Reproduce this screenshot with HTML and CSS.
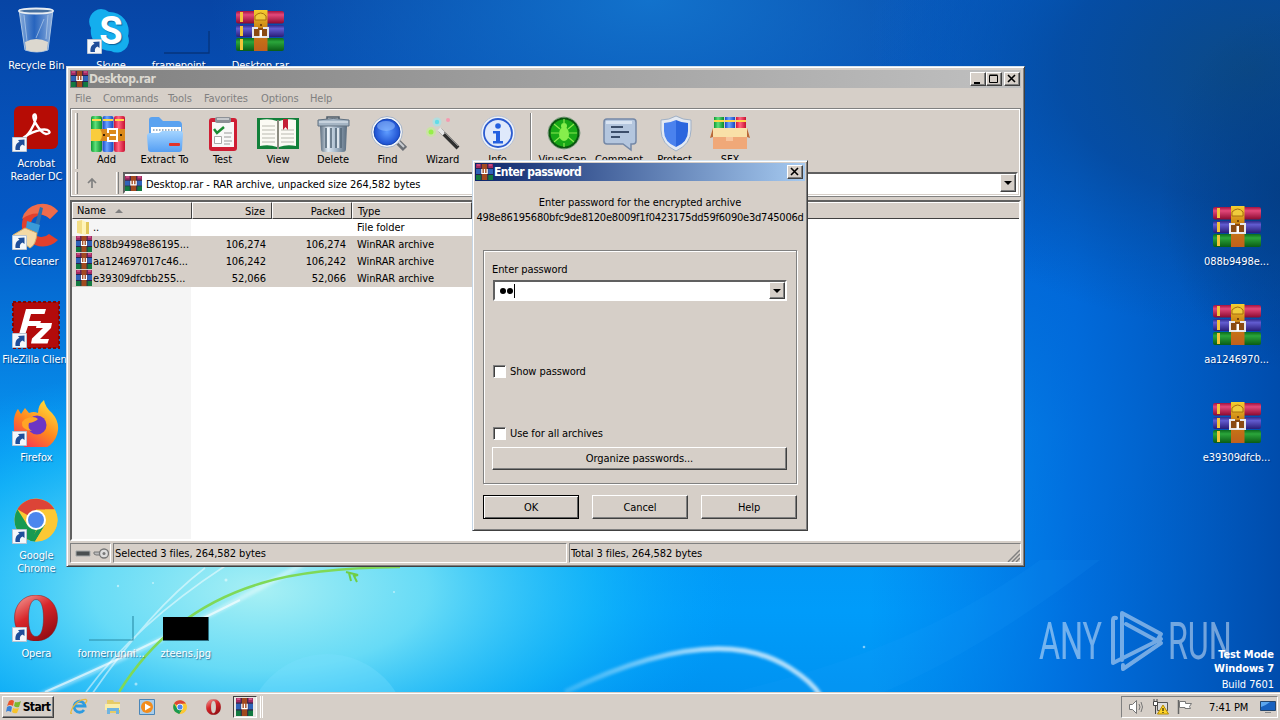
FILE: index.html
```html
<!DOCTYPE html>
<html lang="en">
<head>
  <meta charset="UTF-8" />
  <title>Desktop</title>
  <link rel="stylesheet" href="styles.css">
</head>
<body>

<!-- shared icons -->
<svg class="sprite">
  <defs>
    <linearGradient id="gPink" x2="0" y2="1"><stop offset="0" stop-color="#a3123f"/><stop offset=".3" stop-color="#e2487a"/><stop offset="1" stop-color="#8c0a30"/></linearGradient>
    <linearGradient id="gBlue" x2="0" y2="1"><stop offset="0" stop-color="#2d2a8c"/><stop offset=".3" stop-color="#625cd0"/><stop offset="1" stop-color="#2a1d78"/></linearGradient>
    <linearGradient id="gGreen" x2="0" y2="1"><stop offset="0" stop-color="#0c6b1c"/><stop offset=".3" stop-color="#2ba63b"/><stop offset="1" stop-color="#0a5c16"/></linearGradient>
    <linearGradient id="gStrap" x2="0" y2="1"><stop offset="0" stop-color="#f5cf2e"/><stop offset=".45" stop-color="#c97f12"/><stop offset="1" stop-color="#c0601c"/></linearGradient>
    <linearGradient id="vGreen"><stop offset="0" stop-color="#0d9a33"/><stop offset=".4" stop-color="#5fe07a"/><stop offset="1" stop-color="#0a8a2b"/></linearGradient>
    <linearGradient id="vBlue"><stop offset="0" stop-color="#1748c8"/><stop offset=".4" stop-color="#6ba4ff"/><stop offset="1" stop-color="#1646c0"/></linearGradient>
    <linearGradient id="vRed"><stop offset="0" stop-color="#d01238"/><stop offset=".4" stop-color="#ff6580"/><stop offset="1" stop-color="#c8102f"/></linearGradient>
    <linearGradient id="gFolder" x2="0" y2="1"><stop offset="0" stop-color="#a4d4ff"/><stop offset="1" stop-color="#559ff4"/></linearGradient>
    <linearGradient id="gMetal"><stop offset="0" stop-color="#5c6e80"/><stop offset=".3" stop-color="#dfe9f2"/><stop offset=".6" stop-color="#a3b6c8"/><stop offset="1" stop-color="#5a6c7e"/></linearGradient>
    <linearGradient id="gOpera" x1=".2" x2=".8" y2="1"><stop offset="0" stop-color="#f0908c"/><stop offset=".4" stop-color="#d8262a"/><stop offset="1" stop-color="#8c0a10"/></linearGradient>
    <linearGradient id="gFox" x1=".8" x2=".2" y2="1"><stop offset="0" stop-color="#ffe23c"/><stop offset=".5" stop-color="#ff8a1e"/><stop offset="1" stop-color="#f5285a"/></linearGradient>
    <linearGradient id="gBin"><stop offset="0" stop-color="#b9d2ee" stop-opacity=".75"/><stop offset=".45" stop-color="#3d78cc" stop-opacity=".6"/><stop offset="1" stop-color="#cfe0f4" stop-opacity=".7"/></linearGradient>
    <radialGradient id="gLens"><stop offset="0" stop-color="#5e9cff"/><stop offset="1" stop-color="#1c4fd0"/></radialGradient>
  </defs>

  <symbol id="rar" viewBox="0 0 48 42">
    <rect x="0" y="1" width="48" height="12.500" rx="2" fill="url(#gPink)"/>
    <rect x="0" y="15" width="48" height="12" rx="2" fill="url(#gBlue)"/>
    <rect x="0" y="28" width="48" height="13" rx="2" fill="url(#gGreen)"/>
    <path d="M4 2h3v10h-3zM4 16h3v10h-3zM4 29h3v11h-3z" fill="#f3c53a"/>
    <rect x="18" y="0" width="13.500" height="41" fill="url(#gStrap)"/>
    <path d="M19 10V6q6-6 11 0v4z" fill="#f0cc3c" stroke="#a86e10"/>
    <path d="M18 18h13v9H18z" fill="#8a4a12"/>
    <path d="M22 18h-5v9h15v-9h-5" fill="none" stroke="#e6e6ea" stroke-width="2"/>
    <rect x="23.500" y="20" width="2.500" height="7" fill="#fff"/>
    <circle cx="25" cy="15" r="1" fill="#5c2d08"/>
  </symbol>

  <symbol id="rar16" viewBox="0 0 16 16" preserveAspectRatio="none">
    <path d="M0 0h16v5H0z" fill="#a32a62"/><path d="M0 5h16v5.500H0z" fill="#2f62b8"/><path d="M0 10.500h16V16H0z" fill="#127a40"/>
    <path d="M0 4.500h16M0 10.500h16M5 0v16M11 0v16" stroke="#28234e"/>
    <path d="M1 1h3M12 1h3" stroke="#e36a9a"/>
    <path d="M5.500 0h5v16h-5z" fill="#a2491f"/>
    <path d="M5.500 5v4.500h5V5M8 5v4" fill="none" stroke="#fff" stroke-width="1.200"/>
  </symbol>

  <symbol id="arrow" viewBox="0 0 15 15">
    <path d="M.5.5h14v14H.5z" fill="#f4f7fb" stroke="#b9c4d2"/>
    <path d="M3.500 13C3 8 5 5.500 7.500 5L6 3l6.500-.500V9L10.500 7.500C8 8.500 7.500 10.500 8 13z" fill="#1f4e9a"/>
  </symbol>

  <symbol id="chrome" viewBox="0 0 44 44">
    <circle cx="22" cy="22" r="21.500" fill="#fbc834"/>
    <path d="M22 22 3.400 11.200A21.500 21.500 0 0 1 40.600 11.500H22z" fill="#dc4437"/>
    <path d="M3.400 11.200 14 28l8 4-4 11A21.500 21.500 0 0 1 3.400 11.200z" fill="#189a52"/>
    <path d="M22 22 31 27 21 43.500l-5-.800L24 30z" fill="#189a52"/>
    <path d="M40.600 11.500A21.500 21.500 0 0 1 21 43.500L31 27l0-15.500z" fill="#fbc834"/>
    <circle cx="22" cy="22" r="10" fill="#fff"/>
    <circle cx="22" cy="22" r="8" fill="#4b86ee"/>
  </symbol>

  <symbol id="opera" viewBox="0 0 44 46">
    <path fill-rule="evenodd" d="M22 0C9 0 .5 10 .5 23S9 46 22 46s21.500-10 21.500-23S35 0 22 0zm0 4.500c5 0 7.500 7 7.500 18.500S27 41.500 22 41.500 14.500 34 14.500 23 17 4.500 22 4.500z" fill="url(#gOpera)" stroke="#7d1a1e" stroke-width=".5"/>
  </symbol>
</svg>

<div class="desktop">

  <svg class="wallpaper" viewBox="0 0 1280 720" preserveAspectRatio="none">
    <defs>
      <linearGradient id="sky" x1="0" y1="0" x2="0" y2="1">
        <stop offset="0" stop-color="#0745a5"/><stop offset=".3" stop-color="#0459c6"/><stop offset=".6" stop-color="#0792ee"/><stop offset=".85" stop-color="#009cfa"/><stop offset="1" stop-color="#0090ee"/>
      </linearGradient>
      <linearGradient id="dark" x1="0" y1="0" x2="1" y2="0">
        <stop offset=".68" stop-color="#0070e8" stop-opacity="0"/><stop offset=".84" stop-color="#0068da" stop-opacity=".85"/><stop offset="1" stop-color="#004cac"/>
      </linearGradient>
      <radialGradient id="topGlow"><stop offset="0" stop-color="#1272cc"/><stop offset="1" stop-color="#1272cc" stop-opacity="0"/></radialGradient>
      <radialGradient id="topRight"><stop offset="0" stop-color="#0c4a86"/><stop offset=".5" stop-color="#06489a" stop-opacity=".8"/><stop offset="1" stop-color="#0450a8" stop-opacity="0"/></radialGradient>
      <radialGradient id="rightShade"><stop offset="0" stop-color="#033b80" stop-opacity=".8"/><stop offset="1" stop-color="#033b80" stop-opacity="0"/></radialGradient>
      <radialGradient id="glow"><stop offset="0" stop-color="#a8f0f4"/><stop offset=".35" stop-color="#72e2f6" stop-opacity=".9"/><stop offset=".7" stop-color="#1cc2fa" stop-opacity=".6"/><stop offset="1" stop-color="#00a5ff" stop-opacity="0"/></radialGradient>
      <linearGradient id="arc"><stop offset="0" stop-color="#fff" stop-opacity=".25"/><stop offset=".6" stop-color="#fff"/><stop offset="1" stop-color="#fff"/></linearGradient>
      <filter id="soft"><feGaussianBlur stdDeviation="1.500"/></filter>
    </defs>
    <rect width="1280" height="720" fill="url(#sky)"/>
    <ellipse cx="650" cy="0" rx="440" ry="220" fill="url(#topGlow)"/>
    <rect width="1280" height="720" fill="url(#dark)"/>
    <ellipse cx="1250" cy="70" rx="380" ry="260" fill="url(#topRight)"/>
    <ellipse cx="1290" cy="190" rx="130" ry="180" fill="url(#rightShade)"/>
    <ellipse cx="260" cy="590" rx="480" ry="230" fill="url(#glow)"/>
    <path d="M560 720Q860 690 1040 560L1100 560Q930 690 800 720z" fill="#29a6ff" opacity=".1"/>
    <circle cx="327" cy="735" r="81" fill="#7fe2ff" opacity=".3"/>
    <path d="M40 695Q170 640 310 560" fill="none" stroke="#fff" stroke-width="5" opacity=".4" filter="url(#soft)"/>
    <path d="M45 692Q130 655 240 600" fill="none" stroke="#fff" stroke-width="2" opacity=".6"/>
    <path d="M86 692Q135 625 225 566M92 694Q150 610 205 568" fill="none" stroke="#fff" stroke-width="1.600" opacity=".5"/>
    <path d="M119 692Q170 610 262 583Q310 568 400 567" fill="none" stroke="#7fd957" stroke-width="2.500"/>
    <path d="M346 572l12 3-4 1 3 6M349 573l2 8" fill="none" stroke="#6fce45" stroke-width="2"/>
    <path d="M565 692Q715 620 790 668Q812 682 820 695" fill="none" stroke="url(#arc)" stroke-width="5" opacity=".7" filter="url(#soft)"/>
    <path d="M565 692Q735 640 800 678Q812 686 820 692" fill="none" stroke="url(#arc)" stroke-width="0"/>
    <g fill="#fff" opacity=".5"><circle cx="118" cy="586" r="1.200"/><circle cx="153" cy="583" r="1"/><circle cx="226" cy="580" r="1.500"/><circle cx="136" cy="684" r="1.500"/><circle cx="394" cy="592" r="1"/><circle cx="864" cy="647" r="1.300"/></g>
  </svg>

  <div class="icons">
    <div class="icon c1 r1">
      <svg width="48" height="48" viewBox="0 0 48 48">
        <path d="M7 3h34l-5 40q-11 4-23 0z" fill="url(#gBin)" stroke="#a8c4e4"/>
        <ellipse cx="24" cy="4" rx="17" ry="2.500" fill="#466f9f" stroke="#e8edf2" stroke-width="1.800"/>
        <path d="M13 35q11-6 23 0l-1 8q-10 4-21 0z" fill="#dcd8cf"/>
        <path d="M12 8l3 26M36 8l-2 24M32 12l-8 19" stroke="#c5daf0" opacity=".6"/>
      </svg>
      <span>Recycle Bin</span>
    </div>
    <div class="icon c2 r1">
      <svg width="48" height="48" viewBox="0 0 48 48">
        <path d="M14 2a13 13 0 0 1 8 3 19 19 0 0 1 19 24 12 12 0 0 1-17 15A20 20 0 0 1 4 21 12.500 12.500 0 0 1 14 2z" fill="#14aeee"/>
        <text x="24" y="37" font-family="Roboto, sans-serif" font-size="38" font-weight="700" fill="#fff" text-anchor="middle">S</text>
        <use href="#arrow" x="0" y="32" width="15" height="15"/>
      </svg>
      <span>Skype</span>
    </div>
    <div class="icon c3 r1">
      <svg width="48" height="48" viewBox="0 0 48 48"><path d="M2 46h45V24" fill="none" stroke="#06347c" stroke-width="1.300"/></svg>
      <span class="shift">framepoint</span>
    </div>
    <div class="icon c4 r1">
      <svg width="48" height="48"><use href="#rar" y="3" width="48" height="42"/></svg>
      <span>Desktop.rar</span>
    </div>

    <div class="icon c1 r2">
      <svg width="48" height="48" viewBox="0 0 48 48">
        <rect x="2" y="1" width="44" height="43" rx="6" fill="#b60c05"/>
        <path d="M10 34C16 31 22 22 24 13q0-4-1.500-3.500C18 11 28 28 34 29q5-.5 3-3C33 22 18 27 10 34z" fill="none" stroke="#fff" stroke-width="2.400"/>
        <use href="#arrow" x="0" y="32" width="15" height="15"/>
      </svg>
      <span>Acrobat<br>Reader DC</span>
    </div>
    <div class="icon c1 r3">
      <svg width="48" height="48" viewBox="0 0 48 48">
        <path d="M46 8A21 21 0 1 0 46 37L37 31A11 11 0 1 1 38 16z" fill="#e2402c"/>
        <path d="M10 16A21 21 0 0 1 46 8l-8 8Q25 5 10 16z" fill="#ee6c4c"/>
        <path d="M28 4l3 1-4 18-4-1z" fill="#2c6fae"/>
        <path d="M15 18l13 4-2 8-12-5z" fill="#3a9bd8"/>
        <path d="M13 25l12 5q-1 12-7 15L1 32z" fill="#f5d9a5" stroke="#d8ab66"/>
        <use href="#arrow" x="0" y="32" width="15" height="15"/>
      </svg>
      <span>CCleaner</span>
    </div>
    <div class="icon c1 r4">
      <svg width="48" height="48" viewBox="0 0 48 48">
        <rect x="1" y="1" width="46" height="46" fill="#b30b0b" stroke="#7f0606" stroke-width="2" stroke-dasharray="3 2"/>
        <path d="M14 8h20l-1.500 5H19l-2 7h12l-1.500 5H16l-4 12H6z" fill="#fff"/>
        <path d="M25 22h15l-1 5-11 11h9l-1.500 4.500H19l1-5L31 27h-7z" fill="#fff"/>
        <use href="#arrow" x="0" y="32" width="15" height="15"/>
      </svg>
      <span>FileZilla Client</span>
    </div>
    <div class="icon c1 r5">
      <svg width="48" height="48" viewBox="0 0 48 48">
        <path d="M2 27C1 19 4 12 6 10l3 5 4-6 4 5q5-2 9 0 0-8 6-13 1 7 8 13 7 8 6 17A21 21 0 0 1 2 27z" fill="url(#gFox)"/>
        <circle cx="25" cy="26" r="9.500" fill="#6c36c4"/>
        <path d="M13 20q9-4 13 0-3 3-9 4-2 5 3 8-11-1-10-9z" fill="#ffa426"/>
        <use href="#arrow" x="0" y="32" width="15" height="15"/>
      </svg>
      <span>Firefox</span>
    </div>
    <div class="icon c1 r6">
      <svg width="48" height="48"><use href="#chrome" x="2" y="1" width="44" height="44"/><use href="#arrow" x="0" y="32" width="15" height="15"/></svg>
      <span>Google<br>Chrome</span>
    </div>
    <div class="icon c1 r7">
      <svg width="48" height="48"><use href="#opera" x="2" y="0" width="44" height="46"/><use href="#arrow" x="0" y="32" width="15" height="15"/></svg>
      <span>Opera</span>
    </div>
    <div class="icon c2 r7">
      <svg width="48" height="48" viewBox="0 0 48 48"><path d="M2 45h44V21" fill="none" stroke="#2a8ca6" stroke-width="1.100"/></svg>
      <span>formerrunni...</span>
    </div>
    <div class="icon c3 r7">
      <svg width="48" height="48"><rect x="1" y="22" width="46" height="24" fill="#2b6d80"/><rect x="1" y="22" width="45" height="23" fill="#000"/></svg>
      <span>zteens.jpg</span>
    </div>

    <div class="icon c6 r3"><svg width="48" height="48"><use href="#rar" y="3" width="48" height="42"/></svg><span>088b9498e...</span></div>
    <div class="icon c6 r4"><svg width="48" height="48"><use href="#rar" y="3" width="48" height="42"/></svg><span>aa1246970...</span></div>
    <div class="icon c6 r5"><svg width="48" height="48"><use href="#rar" y="3" width="48" height="42"/></svg><span>e39309dfcb...</span></div>
  </div>

  <svg class="logo" width="210" height="64" viewBox="0 0 210 64">
    <g font-family="Roboto, sans-serif" font-size="51" font-weight="400" fill="#fff">
      <text transform="translate(1 50) scale(.7 1)" textLength="90" lengthAdjust="spacingAndGlyphs">ANY</text>
      <text transform="translate(130 50) scale(.7 1)" textLength="91" lengthAdjust="spacingAndGlyphs">RUN</text>
    </g>
    <g fill="none" stroke="#fff" stroke-width="4" stroke-linejoin="round" stroke-linecap="round">
      <path d="M78 9q-3-1-3 2v43l48-24"/>
      <path d="M84 51V4l39 21-3 5"/>
      <path d="M88 15l35 19-38 26v-4"/>
    </g>
  </svg>
  <div class="build"><b>Test Mode</b><b>Windows 7</b><span>Build 7601</span></div>

  <!-- WinRAR -->
  <div class="window main-win">
    <div class="titlebar inactive">
      <svg width="17" height="16"><use href="#rar16" width="17" height="16"/></svg>
      <span class="title">Desktop.rar</span>
      <div class="btn cap"><svg width="14" height="12"><path d="M3 9h6v2H3z"/></svg></div>
      <div class="btn cap"><svg width="14" height="12"><path d="M2.500 2.500h8v7h-8zM2.500 2h8" fill="none" stroke="#000"/></svg></div>
      <div class="btn cap last"><svg width="14" height="12"><path d="M3 2l7 7M10 2l-7 7" stroke="#000" stroke-width="1.600"/></svg></div>
    </div>
    <div class="menu">
      <span class="m-file">File</span><span class="m-cmd">Commands</span><span class="m-tools">Tools</span><span class="m-fav">Favorites</span><span class="m-opt">Options</span><span>Help</span>
    </div>
    <div class="rebar">
      <div class="toolbar">
        <i class="grip"></i>
        <div class="tool">
          <svg width="38" height="38" viewBox="0 0 38 38">
            <rect x="3" y="1" width="11" height="36" rx="2" fill="url(#vGreen)"/><rect x="14.500" y="1" width="11" height="36" rx="2" fill="url(#vBlue)"/><rect x="26" y="1" width="11" height="36" rx="2" fill="url(#vRed)"/>
            <path d="M4 4h9v2H4zM15 4h10v2H15zM27 4h9v2h-9z" fill="#ffd84a"/>
            <path d="M3 14h34v12H3z" fill="#db8a1c"/><path d="M3 14h9q4 6 0 12H3z" fill="#f9cc3c"/>
            <path d="M20 18v-4h9v12h-9v-4" fill="none" stroke="#fff" stroke-width="2"/><path d="M22 20h6" stroke="#fff" stroke-width="2"/><circle cx="16" cy="20" r="1"/><circle cx="33" cy="20" r="1"/>
          </svg><span>Add</span>
        </div>
        <div class="tool w61">
          <svg width="38" height="38" viewBox="0 0 38 38">
            <path d="M3 5q0-3 3-3h7l4 4h15q4 0 4 4v20H3z" fill="#5aa2f0"/>
            <path d="M5 12h30v12H5z" fill="#fff"/><path d="M7 15h26" stroke="#9bb2c8" stroke-width="2" stroke-dasharray="1.500 1.500"/>
            <path d="M1 21q0-3 3-3h9l3-2h18q3 0 3 3l-1 15q0 3-3 3H5q-3 0-3-3z" fill="url(#gFolder)"/>
            <rect x="23" y="28" width="11" height="3" rx="1" fill="#e2332a"/>
          </svg><span>Extract To</span>
        </div>
        <div class="tool">
          <svg width="38" height="38" viewBox="0 0 38 38">
            <rect x="5" y="3" width="28" height="33" rx="3" fill="#cf1e34"/><path d="M8 7h22v25H8z" fill="#f8f8f8"/>
            <rect x="11" y="2" width="16" height="6" rx="2" fill="#8d9197"/><path d="M13 4h12" stroke="#fff"/>
            <path d="M10 14l3 4 7-6" fill="none" stroke="#1c8b33" stroke-width="2.500"/>
            <path d="M20 18h8M20 22h7M20 26h8M20 29h6" stroke="#9a9a9a"/><path d="M10.500 21.500h7v7h-7z" fill="#fff" stroke="#a9a9a9"/>
          </svg><span>Test</span>
        </div>
        <div class="tool w56">
          <svg width="44" height="38" viewBox="0 0 44 38">
            <path d="M1 3h42v31H1z" fill="#12803a"/>
            <path d="M4 5q9-2 17 1v26q-8-3-17-1zM40 5q-9-2-17 1v26q8-3 17-1z" fill="#fbfaf4"/>
            <path d="M6 11h13M6 15h13M6 19h13M6 23h13M6 27h13M25 15h13M25 19h13M25 23h13M25 27h13" stroke="#b9b9b0"/>
            <path d="M22 5v29" stroke="#8b8b80" stroke-width="2"/><path d="M27 4h5v11l-2.500-3-2.500 3z" fill="#c41f36"/>
          </svg><span>View</span>
        </div>
        <div class="tool w54">
          <svg width="38" height="38" viewBox="0 0 38 38">
            <path d="M6 11h27l-1 23q0 3-3 3H10q-3 0-3-3z" fill="url(#gMetal)"/>
            <path d="M12 13v20M17 13v20M22 13v20M27 13v20" stroke="#526577" stroke-width="1.500"/><path d="M14 13v20M24 13v20" stroke="#f2f7fb" stroke-width="1.500"/>
            <path d="M4 5q15-3 31 0v6H4z" fill="#a5b5c4" stroke="#617180"/><path d="M5 7h29" stroke="#e9f0f6"/><path d="M13 4V2h12v2" fill="none" stroke="#4f5d69" stroke-width="1.500"/>
          </svg><span>Delete</span>
        </div>
        <div class="tool">
          <svg width="38" height="38" viewBox="0 0 38 38">
            <path d="M27 25l9 9" stroke="#6b6f75" stroke-width="6"/><path d="M27 24l8 8" stroke="#c9cdd2" stroke-width="2"/>
            <circle cx="18" cy="17" r="15.500" fill="#f2f5fa" stroke="#a7b4c7"/><circle cx="18" cy="17" r="13" fill="url(#gLens)" stroke="#1646b0"/>
            <ellipse cx="17" cy="11" rx="9" ry="5" fill="#9cc6ff" opacity=".5"/>
          </svg><span>Find</span>
        </div>
        <div class="tool">
          <svg width="38" height="38" viewBox="0 0 38 38">
            <path d="M16 15l18 18" stroke="#303030" stroke-width="4"/><path d="M15 14l5 5" stroke="#e6e6e6" stroke-width="4"/><path d="M20 17l14 14" stroke="#8a8a8a"/>
            <circle cx="7" cy="17" r="5" fill="#bff08c" opacity=".6"/><circle cx="7" cy="17" r="2.500" fill="#97ef4a"/><circle cx="13" cy="7" r="4.500" fill="#9ae8ee" opacity=".6"/><circle cx="13" cy="7" r="2.200" fill="#62dce8"/><circle cx="24" cy="5" r="2" fill="#f59ab0"/>
          </svg><span>Wizard</span>
        </div>
        <div class="tool">
          <svg width="38" height="38" viewBox="0 0 38 38">
            <circle cx="19" cy="18" r="17" fill="#eef2f8" stroke="#b6c1d4"/><circle cx="19" cy="18" r="14" fill="#dfe9fb" stroke="#2b5bd0" stroke-width="1.800"/>
            <circle cx="19" cy="11" r="2.800" fill="#2460e0"/><path d="M14 16h7v10h3v2.500H14V26h3v-7.500h-3z" fill="#2460e0"/>
          </svg><span>Info</span>
        </div>
        <i class="sep"></i>
        <div class="tool w57">
          <svg width="38" height="38" viewBox="0 0 38 38">
            <circle cx="20" cy="18" r="16" fill="#e9f3e6" stroke="#7f9a80"/><circle cx="20" cy="18" r="14.500" fill="#17a816" stroke="#0a5710" stroke-width="2"/>
            <g stroke="#8ae850" stroke-width="1.200" fill="none"><path d="M16 14l-6-5M24 14l6-5M15 18H7M25 18h8M16 22l-6 5M24 22l6 5M20 4v4M20 28v4"/></g>
            <ellipse cx="20" cy="19" rx="5" ry="7" fill="#86ee4c"/><circle cx="20" cy="11" r="3" fill="#86ee4c"/>
          </svg><span>VirusScan</span>
        </div>
        <div class="tool w56">
          <svg width="38" height="38" viewBox="0 0 38 38">
            <path d="M7 4h26q3 0 3 3v19q0 3-3 3h-2v6l-8-6H7q-3 0-3-3V7q0-3 3-3z" fill="#b4c6de" stroke="#7488a6" stroke-width="1.500"/><path d="M6 6h26v3H6z" fill="#d9e4f2"/>
            <path d="M11 12h12M11 17h18M11 22h9" stroke="#3c4e6a" stroke-width="2"/>
          </svg><span>Comment</span>
        </div>
        <div class="tool">
          <svg width="38" height="38" viewBox="0 0 38 38">
            <path d="M20 1q7 4 15 4v10q0 14-15 21Q5 29 5 15V5q8 0 15-4z" fill="#e3e9f2" stroke="#9fb0c6"/>
            <path d="M20 5q6 3 12 3v8q0 11-12 16z" fill="#2b66de"/><path d="M20 5q-6 3-12 3v8q0 11 12 16z" fill="#4a82ee"/>
          </svg><span>Protect</span>
        </div>
        <div class="tool w56">
          <svg width="42" height="38" viewBox="0 0 42 38">
            <path d="M5 2h10v14H5z" fill="url(#vGreen)"/><path d="M16 2h10v14H16z" fill="url(#vBlue)"/><path d="M27 2h10v14H27z" fill="url(#vRed)"/><path d="M5 5h10v2H5zM16 5h10v2H16zM27 5h10v2H27z" fill="#ffd84a"/>
            <path d="M4 13h34v21H4z" fill="#f0a878"/><path d="M4 13h34l3 9H1z" fill="#f9e0a8"/><path d="M4 13l-3 10 3-1zM38 13l3 10-3-1z" fill="#b8683a"/><path d="M17 22h7v4h-7z" fill="#f8c49c"/>
          </svg><span>SFX</span>
        </div>
      </div>
      <div class="address">
        <i class="grip"></i>
        <div class="up"><svg width="12" height="12"><path d="M6 11V2M2 6l4-4 4 4" fill="none" stroke="#808080" stroke-width="1.700"/></svg></div>
        <i class="grip"></i>
        <div class="field path-field">
          <svg width="17" height="15"><use href="#rar16" width="17" height="15"/></svg>
          <span>Desktop.rar - RAR archive, unpacked size 264,582 bytes</span>
          <div class="btn drop"></div>
        </div>
      </div>
    </div>

    <div class="list">
      <div class="row head">
        <div class="name">Name <i class="sort"></i></div><div class="num">Size</div><div class="num">Packed</div><div class="type">Type</div><div class="rest"></div>
      </div>
      <div class="row">
        <div class="name"><svg width="16" height="16"><path d="M1 2l5-1v14l-5-1z" fill="#f3de86"/><path d="M6 1l4 2v13l-4-1z" fill="#fff4b8"/><path d="M10 3h3v12h-3z" fill="#e2c75c"/></svg>..</div><div class="num"></div><div class="num"></div><div class="type">File folder</div>
      </div>
      <div class="row sel">
        <div class="name"><svg width="16" height="16"><use href="#rar16" width="16" height="16"/></svg>088b9498e86195...</div><div class="num">106,274</div><div class="num">106,274</div><div class="type">WinRAR archive</div>
      </div>
      <div class="row sel">
        <div class="name"><svg width="16" height="16"><use href="#rar16" width="16" height="16"/></svg>aa124697017c46...</div><div class="num">106,242</div><div class="num">106,242</div><div class="type">WinRAR archive</div>
      </div>
      <div class="row sel">
        <div class="name"><svg width="16" height="16"><use href="#rar16" width="16" height="16"/></svg>e39309dfcbb255...</div><div class="num">52,066</div><div class="num">52,066</div><div class="type">WinRAR archive</div>
      </div>
    </div>

    <div class="status">
      <div class="pane keys">
        <svg width="36" height="14"><path d="M3 5h14v5H3z" fill="#4a4f50" stroke="#a4a8a8"/><path d="M21 6h8v3h-6l-2-1z" fill="#bbb" stroke="#777"/><circle cx="31" cy="7.500" r="4.500" fill="#ddd" stroke="#777" stroke-width="1.300"/><circle cx="31" cy="7.500" r="1.500" fill="#777"/></svg>
      </div>
      <div class="pane selected">Selected 3 files, 264,582 bytes</div>
      <div class="pane total"><span>Total 3 files, 264,582 bytes</span><svg width="13" height="13"><path d="M1 13L13 1M5 13l8-8M9 13l4-4" stroke="#808080" stroke-width="1.500"/></svg></div>
    </div>
  </div>

  <!-- password prompt -->
  <div class="window dialog">
    <div class="titlebar active">
      <svg width="17" height="16"><use href="#rar16" width="17" height="16"/></svg>
      <span class="title">Enter password</span>
      <div class="btn cap last"><svg width="14" height="12"><path d="M3 2l7 7M10 2l-7 7" stroke="#000" stroke-width="1.600"/></svg></div>
    </div>
    <div class="prompt">
      <div>Enter password for the encrypted archive</div>
      <div class="hash">498e86195680bfc9de8120e8009f1f0423175dd59f6090e3d745006d</div>
    </div>
    <div class="group">
      <div class="label">Enter password</div>
      <div class="field pass"><span class="dot"></span><span class="dot"></span><i class="caret"></i><div class="btn drop"></div></div>
      <div class="check show"><i></i>Show password</div>
      <div class="check all"><i></i>Use for all archives</div>
      <div class="btn organize">Organize passwords...</div>
    </div>
    <div class="actions">
      <div class="btn default">OK</div><div class="btn">Cancel</div><div class="btn">Help</div>
    </div>
  </div>

  <div class="taskbar">
    <div class="btn start">
      <svg width="16" height="16" viewBox="0 0 16 16"><path d="M3 2q3-2 5 0L7 7Q4 5 1 7z" fill="#e8552b"/><path d="M9 3q3 1 6-1l-2 6q-3 1-5-1z" fill="#7cb82f"/><path d="M1 8q3-2 5 0l-1 5q-3-2-5 0z" fill="#3a82d8"/><path d="M7 9q3 1 6 0l-2 5q-3 1-5-1z" fill="#f6c32c"/></svg>
      <b>Start</b>
    </div>
    <div class="quick">
      <svg width="18" height="18" viewBox="0 0 18 18"><path d="M14 12a5.500 5.500 0 1 1 1-4H5" fill="none" stroke="#2d9be0" stroke-width="2.800"/><path d="M2 15Q-1 17 3 9 9 1 16 1.500q2 1-1 4" fill="none" stroke="#e9b93c" stroke-width="1.300"/></svg>
      <svg width="18" height="18" viewBox="0 0 18 18"><path d="M3 2h6l1 2h6v11H3z" fill="#e6cb66"/><path d="M1 6h15v6H1z" fill="#faedaa"/><path d="M3 10h12v6h-3v-3H6v3H3z" fill="#6fb4e0"/></svg>
      <svg width="18" height="18" viewBox="0 0 18 18"><path d="M1.500 1.500h15v15h-15z" fill="#a9cdea" stroke="#4a86b8"/><circle cx="9" cy="9" r="6" fill="#f28c1c"/><path d="M7 5.500l6 3.500-6 3.500z" fill="#fff"/></svg>
      <svg width="18" height="18"><use href="#chrome" x="2" y="2" width="14" height="14"/></svg>
      <svg width="18" height="18"><use href="#opera" x="1" y="1" width="15" height="16"/></svg>
    </div>
    <div class="running"><svg width="17" height="18"><use href="#rar16" width="17" height="18"/></svg></div>
    <i class="grip"></i>
    <div class="tray">
      <svg width="18" height="16" viewBox="0 0 18 16"><path d="M1.500 5.500h3l4-4v13l-4-4h-3z" fill="#fff" stroke="#777"/><path d="M11 5q2 3 0 6M13 3q3 5 0 10" fill="none" stroke="#777"/></svg>
      <svg width="18" height="16" viewBox="0 0 18 16"><path d="M5.500 3.500h10v8h-10z" fill="#ddd" stroke="#555"/><path d="M1.500 2.500h4v4h-4zM3.500 7v8M2 0v2M5 0v2" fill="#fff" stroke="#444"/><path d="M11 6l5.500 9h-11z" fill="#ffd428" stroke="#b58a00"/><path d="M11 9v3M11 13v1" stroke="#000"/></svg>
      <svg width="18" height="16" viewBox="0 0 18 16"><path d="M2.500 1v14" stroke="#666" stroke-width="1.500"/><path d="M3.500 2.500h6v2h6l-2 3 1 2H9v-1H3.500z" fill="#fff" stroke="#777"/></svg>
      <span>7:41 PM</span>
      <svg width="17" height="16" viewBox="0 0 17 16"><path d="M1.500 2.500h15v9h-15z" fill="#1761bf" stroke="#24466e"/><path d="M2 3h9q-5 4-9 5z" fill="#5ba6ef"/><path d="M6 13h6v1H6z" fill="#888"/></svg>
    </div>
  </div>

</div>

</body>
</html>
```
FILE: styles.css
```css
* {
  box-sizing: border-box;
}
html, body {
  margin: 0;
  padding: 0;
  height: 100%;
  overflow: hidden;
}
body {
  font-family: "DejaVu Sans Condensed", "DejaVu Sans", sans-serif;
  font-size: 11px;
  letter-spacing: -0.08px;
  color: #000;
}
svg {
  display: block;
  flex: none;
}

.sprite {
  position: absolute;
  width: 0;
  height: 0;
}

.desktop {
  position: relative;
  width: 1280px;
  height: 720px;
  overflow: hidden;
}

.wallpaper {
  position: absolute;
  width: 1280px;
  height: 720px;
}

/* desktop icons */
.icons {
  position: absolute;
  top: 7px;
  left: -1px;
  width: 1275px;
  display: grid;
  grid-template-columns: repeat(4, 74.7px) 1fr 75px;
  grid-template-rows: repeat(7, 98px);
}
.icon {
  display: flex;
  flex-direction: column;
  align-items: center;
  gap: 4px;
  color: #fff;
  line-height: 13px;
  text-align: center;
  white-space: nowrap;
  text-shadow: 1px 1px 1px rgba(0, 20, 70, 0.5);
}
.shift { margin-right: 14px; }
.c1 { grid-column: 1; }
.c2 { grid-column: 2; }
.c3 { grid-column: 3; }
.c4 { grid-column: 4; }
.c6 { grid-column: 6; }
.r1 { grid-row: 1; }
.r2 { grid-row: 2; }
.r3 { grid-row: 3; }
.r4 { grid-row: 4; }
.r5 { grid-row: 5; }
.r6 { grid-row: 6; }
.r7 { grid-row: 7; }

.logo {
  position: absolute;
  left: 1038px;
  top: 609px;
  opacity: 0.45;
}
.build {
  position: absolute;
  right: 6px;
  top: 648px;
  display: flex;
  flex-direction: column;
  align-items: flex-end;
  line-height: 14px;
  color: #fff;
}
.build span {
  line-height: 18px;
}

/* windows */
.window {
  position: absolute;
  display: flex;
  flex-direction: column;
  background: #d6cfc8;
  border: 1px solid;
  border-color: #d6e3ee #404040 #404040 #c6d6e6;
  box-shadow: inset 1px 1px #fff, inset -1px -1px #808080;
}
.main-win {
  left: 66px;
  top: 66px;
  width: 959px;
  height: 501px;
  padding: 3px;
}
.titlebar {
  display: flex;
  align-items: center;
  height: 18px;
  padding: 0 2px 0 1px;
  font-weight: bold;
}
.title {
  flex: 1;
  padding-left: 1px;
  font-size: 12px;
  letter-spacing: -0.55px;
}
.inactive {
  padding-right: 1px;
  background: linear-gradient(90deg, #808080, #c0c0c0);
  color: #dcd8d0;
}
.active {
  background: linear-gradient(90deg, #0a246a, #a6caf0);
  color: #fff;
}
.btn {
  display: flex;
  align-items: center;
  justify-content: center;
  background: #d6cfc8;
  border: 1px solid;
  border-color: #fff #404040 #404040 #fff;
  box-shadow: inset -1px -1px #808080;
}
.cap {
  width: 16px;
  height: 14px;
}
.last {
  margin-left: 2px;
}
.menu {
  display: flex;
  height: 20px;
  padding-left: 5px;
  line-height: 21px;
  color: #808080;
}
.m-file { width: 28px; }
.m-cmd { width: 65px; }
.m-tools { width: 36px; }
.m-fav { width: 57px; }
.m-opt { width: 49px; }

.rebar {
  height: 89px;
  border: 1px solid #808080;
  box-shadow: inset 1px 1px #fff, inset -1px -1px #fff;
  padding: 4px 2px 0 4px;
}
.grip {
  width: 3px;
  border-left: 1px solid #fff;
  border-right: 1px solid #808080;
}
.toolbar {
  display: flex;
  height: 56px;
}
.tool {
  width: 55px;
  display: flex;
  flex-direction: column;
  align-items: center;
  padding-top: 2px;
  line-height: 13px;
  white-space: nowrap;
}
.toolbar .grip + .tool { margin-left: 1px; }
.w54 { width: 54px; }
.w56 { width: 56px; }
.w57 { width: 57px; }
.w61 { width: 61px; }
.sep {
  width: 2px;
  margin: 0 2px 0 5px;
  border-left: 1px solid #808080;
  border-right: 1px solid #fff;
}
.address {
  display: flex;
  height: 22px;
  margin-top: 3px;
}
.up {
  width: 38px;
  display: flex;
  align-items: center;
  padding-left: 8px;
}
.field {
  display: flex;
  align-items: center;
  background: #fff;
  border: 2px solid;
  border-color: #606060 #fff #fff #606060;
}
.path-field {
  flex: 1;
  margin-left: 4px;
}
.path-field span {
  flex: 1;
  padding: 2px 0 0 4px;
}
.drop {
  width: 16px;
  height: 100%;
}
.drop::after {
  content: '';
  border: 4px solid transparent;
  border-top-color: #000;
  border-bottom: 0;
}

.list {
  flex: 1;
  margin-top: 3px;
  border: 2px solid;
  border-color: #606060 #fff #fff #606060;
  background: linear-gradient(90deg, #f5f5f5 119px, #fff 119px);
}
.row {
  display: flex;
  height: 17px;
  line-height: 18px;
  white-space: nowrap;
}
.row > div {
  width: 80px;
}
.row > .name {
  display: flex;
  gap: 1px;
  width: 120px;
  padding-left: 4px;
}
.row > .type {
  width: 120px;
  padding-left: 5px;
}
.row .num {
  padding-right: 6px;
  text-align: right;
}
.sel > div {
  background: #d6cfc8;
}
.head > div {
  background: #d6cfc8;
  border: 1px solid;
  border-color: #fff #404040 #404040 #fff;
  line-height: 17px;
}
.head > .name {
  align-items: center;
}
.head > .rest {
  flex: 1;
  border-right: 0;
}
.sort {
  margin-left: 8px;
  border: 4px solid transparent;
  border-bottom-color: #808080;
  border-top: 0;
}

.status {
  display: flex;
  gap: 2px;
  height: 20px;
  margin-top: 2px;
}
.pane {
  padding-left: 1px;
  border: 1px solid;
  border-color: #808080 #fff #fff #808080;
  line-height: 20px;
}
.keys { width: 41px; padding: 2px; }
.selected { width: 454px; }
.total {
  flex: 1;
  display: flex;
  justify-content: space-between;
  align-items: flex-end;
}
.total span {
  align-self: flex-start;
}

/* dialog */
.dialog {
  left: 472px;
  top: 160px;
  width: 336px;
  height: 371px;
  padding: 2px;
}
.prompt {
  margin-top: 14px;
  height: 55px;
  line-height: 15px;
  text-align: center;
}
.hash {
  display: flex;
  justify-content: center;
  letter-spacing: -0.22px;
  white-space: nowrap;
  overflow: hidden;
}
.group {
  width: 314px;
  height: 234px;
  margin-left: 8px;
  padding: 11px 9px 0 8px;
  border: 1px solid #808080;
  box-shadow: 1px 1px #fff, inset 1px 1px #fff;
}
.label {
  height: 18px;
  line-height: 16px;
}
.pass {
  height: 21px;
  margin-left: 1px;
  padding-left: 5px;
}
.dot {
  width: 6px;
  height: 6px;
  margin-right: 1px;
  border-radius: 3px;
  background: #000;
}
.caret {
  width: 1px;
  height: 14px;
  background: #000;
}
.pass .drop {
  margin-left: auto;
}
.check {
  display: flex;
  align-items: center;
  gap: 4px;
  height: 14px;
}
.check i {
  width: 13px;
  height: 13px;
  margin-left: 1px;
  background: #fff;
  border: 1px solid;
  border-color: #808080 #fff #fff #808080;
  box-shadow: inset 1px 1px #404040;
}
.show { margin-top: 63px; }
.all { margin-top: 48px; }
.organize {
  height: 23px;
  margin-top: 7px;
}
.actions {
  display: flex;
  gap: 13px;
  margin: 11px 0 0 8px;
}
.actions .btn {
  width: 96px;
  height: 24px;
}
.actions .default {
  outline: 1px solid #000;
  outline-offset: -1px;
  border-color: #000;
  box-shadow: inset 1px 1px #fff, inset -1px -1px #606060;
}

/* taskbar */
.taskbar {
  position: absolute;
  left: 0;
  right: 0;
  bottom: 0;
  height: 28px;
  display: flex;
  align-items: center;
  padding: 2px 2px 0;
  background: #d6cfc8;
  box-shadow: inset 0 1px #d6cfc8, inset 0 2px #fff;
}
.start {
  width: 52px;
  height: 22px;
  gap: 1px;
  font-size: 12px;
  letter-spacing: -0.6px;
}
.quick {
  display: flex;
  gap: 15.800px;
  margin: 0 10px 0 16px;
}
.running {
  width: 24px;
  height: 22px;
  padding: 1px 2px;
  border: 1px solid;
  border-color: #404040 #fff #fff #404040;
  background: #eae7e3;
}
.taskbar > .grip {
  height: 22px;
  margin-left: 3px;
  border-right-color: #fff;
}
.tray {
  display: flex;
  align-items: center;
  gap: 6px;
  width: 157px;
  height: 22px;
  margin-left: auto;
  padding: 0 1px 0 6px;
  border: 1px solid;
  border-color: #808080 #fff #fff #808080;
}
.tray span {
  margin: 0 auto 0 9px;
}
```
